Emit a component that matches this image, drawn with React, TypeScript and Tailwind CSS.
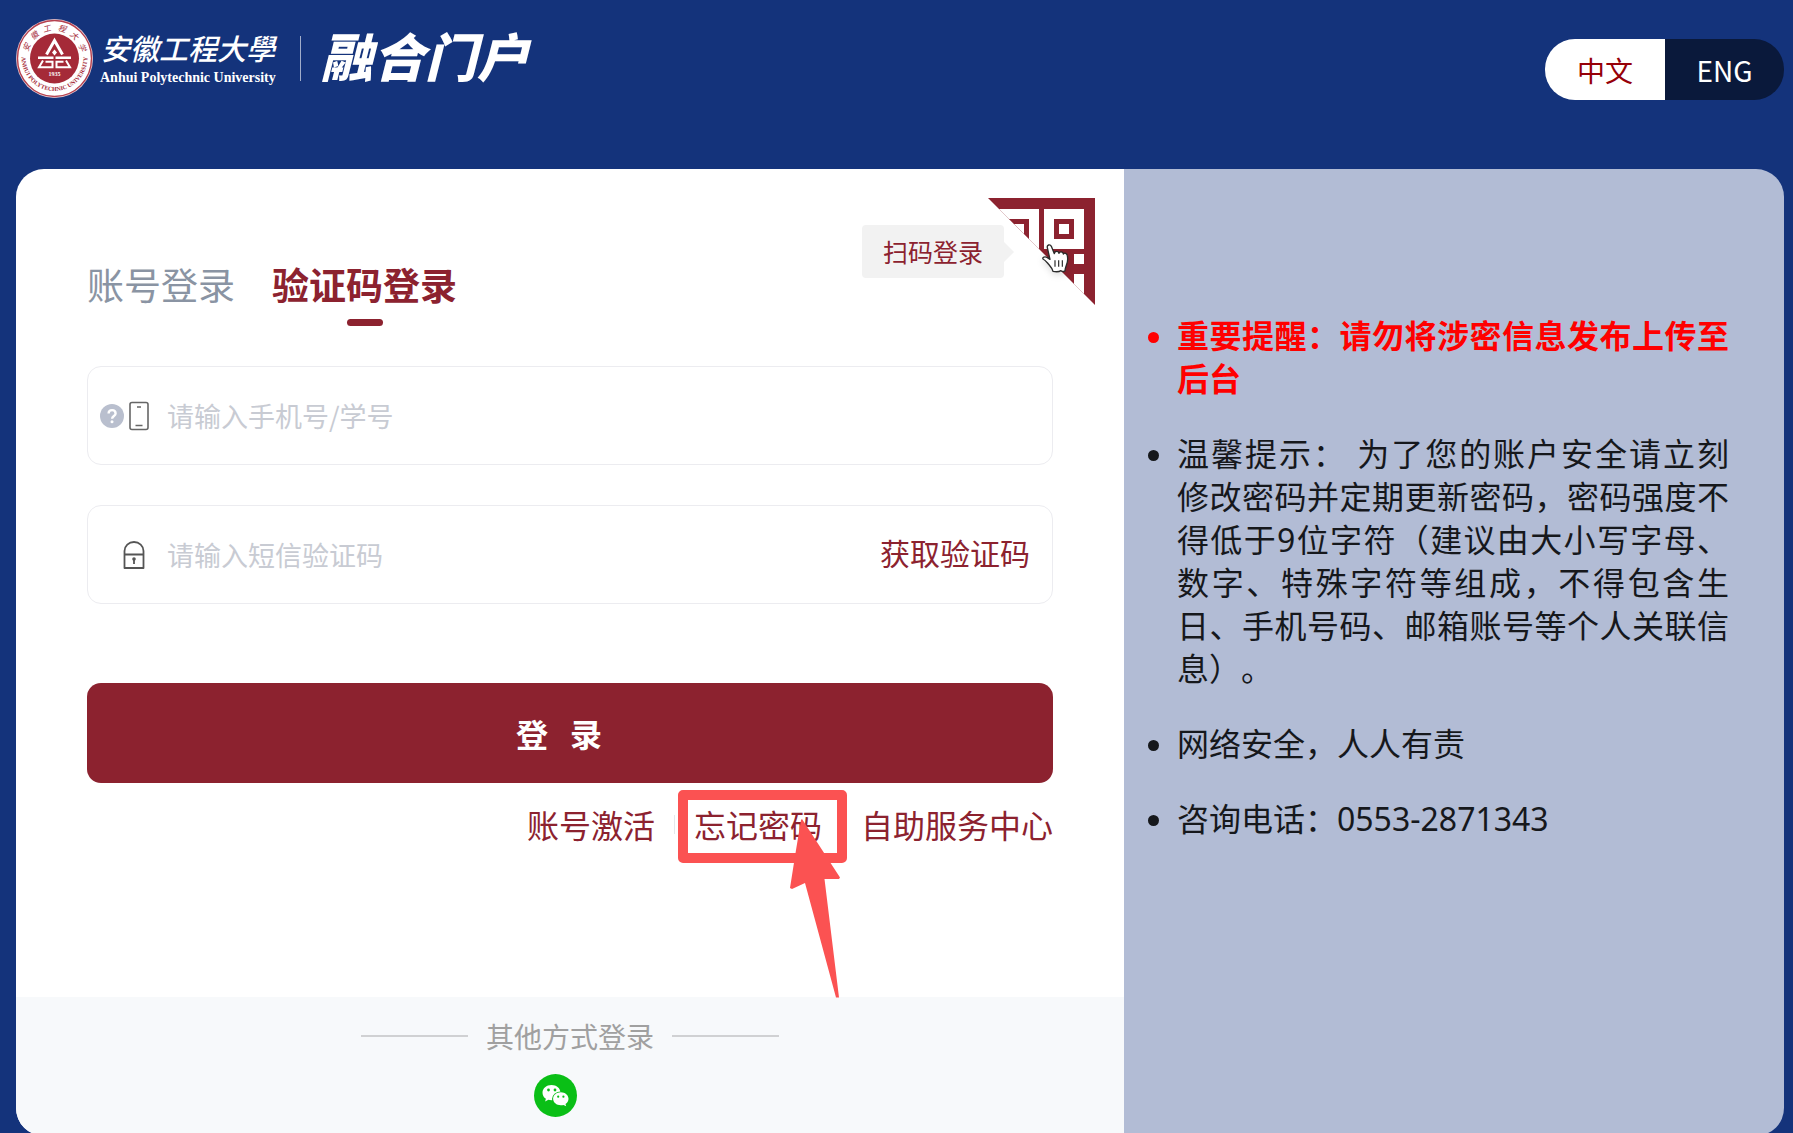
import type { ReactNode } from 'react';

const notices = [
  { text: '重要提醒：请勿将涉密信息发布上传至后台', important: true },
  {
    text: '温馨提示： 为了您的账户安全请立刻修改密码并定期更新密码，密码强度不得低于9位字符（建议由大小写字母、数字、特殊字符等组成，不得包含生日、手机号码、邮箱账号等个人关联信息）。',
  },
  { text: '网络安全，人人有责' },
  { text: '咨询电话：0553-2871343' },
];

function Seal() {
  return (
    <svg viewBox="0 0 77 79" className="h-[79px] w-[77px] flex-none" aria-hidden="true">
      <defs>
        <path id="seal-top" d="M11.5 39.5a27 28 0 0 1 54 0" />
        <path id="seal-bottom" d="M5.500 38a33 34 0 0 0 66 0" />
      </defs>
      <ellipse cx="38.5" cy="39.5" rx="38.5" ry="39.5" fill="#e6c9d0" />
      <ellipse cx="38.5" cy="39.5" rx="37" ry="38" fill="#fff" stroke="#b5404e" strokeWidth="1.4" />
      <ellipse cx="38.5" cy="39.5" rx="24.5" ry="25" fill="#a52a38" />
      <g fill="#a52a38" fontSize="8" fontFamily="'Noto Sans CJK SC', sans-serif" fontStyle="italic" textAnchor="middle">
        <text>
          <textPath href="#seal-top" startOffset="12%">安</textPath>
        </text>
        <text>
          <textPath href="#seal-top" startOffset="27%">徽</textPath>
        </text>
        <text>
          <textPath href="#seal-top" startOffset="42%">工</textPath>
        </text>
        <text>
          <textPath href="#seal-top" startOffset="58%">程</textPath>
        </text>
        <text>
          <textPath href="#seal-top" startOffset="73%">大</textPath>
        </text>
        <text>
          <textPath href="#seal-top" startOffset="88%">学</textPath>
        </text>
      </g>
      <text fill="#a52a38" fontSize="6" fontWeight="700" fontFamily="'Liberation Serif', serif" textAnchor="middle">
        <textPath href="#seal-bottom" startOffset="50%">ANHUI POLYTECHNIC UNIVERSITY</textPath>
      </text>
      <g fill="none" stroke="#fff">
        <path d="M30.5 35.5 38.5 21.5l8 14" strokeWidth="3" />
        <path d="M22 38.700h15.500M39.500 38.700H55" strokeWidth="2.4" />
        <path d="M27 41.500 23 48.200h13.500v-5.500h-7M50 41.500l4 6.700H40.500v-5.500h7" strokeWidth="2" />
      </g>
      <path d="m38.500 30.500 2.500 3-2.500 3-2.500-3z" fill="#fff" />
      <text x="38.5" y="57" fill="#fff" fontSize="6" fontWeight="700" fontFamily="'Liberation Serif', serif" textAnchor="middle">
        1935
      </text>
    </svg>
  );
}

function QrCorner() {
  return (
    <svg viewBox="0 0 107 107" className="h-full w-full" shapeRendering="crispEdges" aria-hidden="true">
      <defs>
        <clipPath id="qr-corner">
          <path d="M0 0h107v107z" />
        </clipPath>
      </defs>
      <g clipPath="url(#qr-corner)">
        <path d="M0 0h107v107H0z" fill="#8c222f" />
        <path d="M11 11h40v40H11zM56 11h40v40H56zM86 56h10v10H86zM86 76h10v31H86z" fill="#fff" />
        <path d="M21 21h20v20H21zM66 21h20v20H66z" fill="#8c222f" />
        <path d="M26 26h10v10H26zM71 26h10v10H71z" fill="#fff" />
      </g>
    </svg>
  );
}

function HandCursor() {
  return (
    <svg
      viewBox="600 182 96 96"
      className="pointer-events-none absolute top-[44px] left-[52px] h-8 w-8 overflow-visible drop-shadow-md"
      aria-hidden="true"
    >
      <path
        d="M622 199c-2-8 8-12 12-4l9 22c1-9 12-9 14-1 3-7 12-5 13 2 4-5 11-2 12 5 2 10 1 20-3 29-2 5-4 9-4 16-4 4-8 3-12 0-6 4-15 4-24 2-2-9-8-15-14-22-5-6-8-11-16-15-3-6 6-8 12-5l9 6z"
        fill="#fff"
        stroke="#2a2a2a"
        strokeWidth="4"
        strokeLinejoin="round"
      />
      <path d="M645 237v19M656 237v19M667 237v19" stroke="#2a2a2a" strokeWidth="3.5" />
    </svg>
  );
}

function HelpIcon() {
  return (
    <svg viewBox="0 0 24 24" className="h-6 w-6" aria-hidden="true">
      <circle cx="12" cy="12" r="12" fill="#b9bfce" />
      <path d="M8.600 9.400c0-4.400 7-4.400 7 0 0 2.600-3.500 2.600-3.500 5.400" fill="none" stroke="#fff" strokeWidth="2.4" />
      <circle cx="12" cy="17.8" r="1.5" fill="#fff" />
    </svg>
  );
}

function PhoneIcon() {
  return (
    <svg viewBox="0 0 20 30" className="h-[30px] w-5" fill="none" stroke="#666" strokeWidth="1.6" aria-hidden="true">
      <rect x="1" y="1.5" width="18" height="27" rx="2" />
      <path d="M8 6h4M6.500 24.500h7" />
    </svg>
  );
}

function LockIcon() {
  return (
    <svg viewBox="0 0 22 28" className="h-7 w-[22px]" fill="none" stroke="#555" strokeWidth="1.8" aria-hidden="true">
      <path d="M1.500 13.500V10a9.500 9 0 0 1 19 0v3.500M1.500 13.500h19V27h-19z" strokeLinejoin="round" />
      <path d="M11 17v6" />
      <circle cx="11" cy="18" r="1.8" fill="#555" stroke="none" />
    </svg>
  );
}

function WechatIcon() {
  return (
    <svg viewBox="0 0 43 43" className="h-[43px] w-[43px]" aria-hidden="true">
      <circle cx="21.5" cy="21.5" r="21.5" fill="#0abf16" />
      <path d="M17.5 11c-5 0-9 3.300-9 7.700 0 2.600 1.300 4.700 3.400 6.100l-.8 2.700 3.300-1.700c1 .3 2 .4 3.100.4 5 0 9-3.200 9-7.500S22.500 11 17.500 11z" fill="#fff" />
      <ellipse cx="26.8" cy="25" rx="8.8" ry="7.6" fill="#0abf16" />
      <path d="M26.800 18.300c-4.300 0-7.700 2.900-7.700 6.500s3.400 6.500 7.700 6.500c1 0 1.900-.1 2.700-.4l2.700 1.400-.7-2.300c1.900-1.200 3-3 3-5.200 0-3.600-3.400-6.500-7.700-6.500z" fill="#fff" />
      <g fill="#0abf16">
        <circle cx="14.5" cy="16" r="1.4" />
        <circle cx="21" cy="16" r="1.4" />
        <circle cx="24.2" cy="22.7" r="1.1" />
        <circle cx="29.4" cy="22.7" r="1.1" />
      </g>
    </svg>
  );
}

function Field({ id, label, icon, iconClass, children }: { id: string; label: string; icon: ReactNode; iconClass: string; children?: ReactNode }) {
  return (
    <div className="mt-10 flex h-[99px] items-center rounded-[14px] border border-[#ececf0] pr-[22px]">
      <label htmlFor={id} aria-label={label} className={`flex w-[79px] flex-none items-center gap-[5px] ${iconClass}`}>
        {icon}
      </label>
      <input
        id={id}
        type="text"
        placeholder={label}
        className="h-full min-w-0 flex-1 bg-transparent text-[27px] text-gray-800 outline-none placeholder:text-[#c8cbd3]"
      />
      {children}
    </div>
  );
}

// Red frame and arrow pointing at the "forgot password" link
function Highlight() {
  return (
    <span className="pointer-events-none" aria-hidden="true">
      <span className="absolute -top-[10px] -left-4 h-[73px] w-[169px] rounded-[5px] border-[10px] border-[#fb5252]" />
      <svg viewBox="0 0 54 180" className="absolute top-[18px] left-[94px] h-[180px] w-[54px]">
        <path d="M14 1 52 59.500 51 61H36.500L51 179.500H48L17 65 4 71 2 70 8 32 13 2z" fill="#fb5252" />
      </svg>
    </span>
  );
}

export default function App() {
  return (
    <div className="min-h-screen bg-[#14337b] pr-[9px] pl-4 font-['Noto_Sans_CJK_SC',sans-serif]">
      <header className="flex items-start justify-between pt-[19px] pb-[69px]">
        <div className="flex items-center text-white">
          <Seal />
          <div className="ml-[7px] flex flex-col items-center pb-1">
            <span className="text-[29px] leading-[42px] font-medium italic">安徽工程大學</span>
            <span className="font-['Liberation_Serif',serif] text-[14px] leading-5 font-bold">Anhui Polytechnic University</span>
          </div>
          <span className="ml-6 h-[45px] w-px bg-[#a1adca]" />
          <h1 className="ml-5 pb-2 text-[52px] leading-[60px] font-black italic">融合门户</h1>
        </div>
        <div className="mt-5 flex h-[61px] overflow-hidden rounded-[30px] text-[28px]">
          <button type="button" className="w-[120px] bg-white text-[#960008]">中文</button>
          <button type="button" className="w-[119px] bg-[#0a193b] text-white">ENG</button>
        </div>
      </header>

      <main className="grid grid-cols-[277fr_165fr] overflow-hidden rounded-[28px]">
        <section className="relative flex flex-col bg-white">
          <button type="button" aria-label="扫码登录" className="absolute top-[29px] right-[29px] h-[107px] w-[107px]">
            <QrCorner />
            <HandCursor />
          </button>
          <div className="absolute top-[56px] right-[120px] flex h-[53px] w-[142px] items-center justify-center rounded-[4px] bg-[#f2f2f2] text-[25px] text-[#8c222f]">
            扫码登录
            <svg viewBox="0 0 10 20" className="absolute top-[17px] -right-[10px] h-5 w-[10px]" aria-hidden="true">
              <path d="M0 0 10 10 0 20z" fill="#f2f2f2" />
            </svg>
          </div>

          <form className="px-[71px] pt-[91px] pb-[147px]">
            <div className="flex items-start gap-[37px] text-[37px] leading-[48px]">
              <button type="button" className="text-[#8a94a3]">账号登录</button>
              <button type="button" className="flex flex-col items-center font-bold text-[#8c222f]">
                验证码登录
                <span className="mt-[11px] h-[7px] w-9 rounded-full bg-[#8c222f]" />
              </button>
            </div>

            <Field
              id="account"
              label="请输入手机号/学号"
              iconClass="pl-3"
              icon={
                <>
                  <HelpIcon />
                  <PhoneIcon />
                </>
              }
            />
            <Field id="code" label="请输入短信验证码" iconClass="pl-[35px]" icon={<LockIcon />}>
              <button type="button" className="pb-1 text-[30px] text-[#8c222f]">获取验证码</button>
            </Field>

            <button
              type="submit"
              className="mt-[79px] flex h-[100px] w-full items-center justify-center gap-[22px] rounded-[14px] bg-[#8c222f] pr-[22px] text-[32px] font-bold text-white"
            >
              <span>登</span>
              <span>录</span>
            </button>

            <nav className="mt-[17px] mb-[2px] flex items-center justify-end text-[32px] leading-[48px] text-[#8c222f]">
              <a href="#activate">账号激活</a>
              <span className="mx-[19px] h-[19px] w-px bg-gray-200" />
              <a href="#forgot" className="relative">
                忘记密码
                <Highlight />
              </a>
              <span className="mx-[19px] h-[19px] w-px bg-gray-200" />
              <a href="#service">自助服务中心</a>
            </nav>
          </form>

          <footer className="mt-auto flex flex-col items-center bg-[#f7f9fb] pt-[22px] pb-[19px]">
            <div className="flex items-center gap-[18px] text-[28px] leading-[34px] text-[#a0a0a0]">
              <span className="h-[2px] w-[107px] bg-[#d0d1d3]" />
              其他方式登录
              <span className="h-[2px] w-[107px] bg-[#d0d1d3]" />
            </div>
            <button type="button" aria-label="微信" className="mt-[21px] mr-[29px]">
              <WechatIcon />
            </button>
          </footer>
        </section>

        <aside className="bg-[#b2bcd5] pt-[145px] pr-[55px] pl-[53px]">
          <ul className="list-disc space-y-8 text-justify font-['Noto_Sans','Noto_Sans_CJK_SC',sans-serif] text-[32px] leading-[43px] text-[#16181c] [text-spacing-trim:space-all]">
            {notices.map((notice) => (
              <li key={notice.text} className={notice.important ? 'font-bold text-[#ff0000]' : ''}>
                {notice.text}
              </li>
            ))}
          </ul>
        </aside>
      </main>
    </div>
  );
}
